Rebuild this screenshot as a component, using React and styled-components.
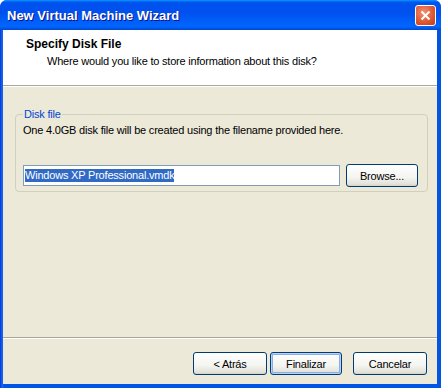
import React from 'react';
import styled, { createGlobalStyle } from 'styled-components';

const Global = createGlobalStyle`
  html, body { margin: 0; padding: 0; background: #fff; }
  body {
    font-family: Tahoma, "Liberation Sans", Arial, sans-serif;
    font-size: 11px;
    letter-spacing: -0.2px;
    color: #000;
  }
`;

const Window = styled.div`
  width: 441px;
  height: 388px;
  box-sizing: border-box;
  display: flex;
  flex-direction: column;
  background: linear-gradient(to right, #0831d9 0, #166aee 2px, #0055e5 4px);
  border-radius: 7px 7px 0 0;
  overflow: hidden;
`;

const TitleBar = styled.div`
  height: 30px;
  flex: none;
  display: flex;
  align-items: center;
  justify-content: space-between;
  padding: 0 5px 0 7px;
  background: linear-gradient(to bottom, #0997ff 0, #0053ee 8%, #0050ee 40%, #0066ff 88%, #0048d0 100%);
`;

const Title = styled.span`
  color: #fff;
  font-family: "Liberation Sans", Arial, sans-serif;
  font-weight: bold;
  font-size: 13px;
  letter-spacing: 0;
  text-shadow: 1px 1px #0f1089;
`;

const CloseButton = styled.div`
  width: 21px;
  height: 21px;
  box-sizing: border-box;
  border: 1px solid #fff;
  border-radius: 3px;
  background: radial-gradient(circle at 40% 35%, #f29176 0, #e05a34 55%, #c2391a 100%);
  display: flex;
  align-items: center;
  justify-content: center;
`;

const Client = styled.div`
  flex: 1;
  margin: 0 4px 4px 3px;
  background: #ece9d8;
  display: flex;
  flex-direction: column;
`;

const Header = styled.div`
  height: 56px;
  background: #fff;
  border-bottom: 1px solid #aca899;
  box-shadow: 0 1px 0 #fff;
  padding: 7px 0 0 23px;
  box-sizing: border-box;
`;

const HeaderTitle = styled.div`
  font-weight: bold;
  font-size: 12px;
  letter-spacing: 0;
  line-height: 14px;
`;

const HeaderSub = styled.div`
  margin: 4px 0 0 21px;
  line-height: 13px;
`;

const Body = styled.div`
  flex: 1;
  padding: 22px 10px 0 12px;
`;

const Group = styled.fieldset`
  margin: 0;
  padding: 3px 9px 9px 7px;
  border: 1px solid #d0d0bf;
  border-radius: 4px;
  height: 84px;
  box-sizing: border-box;
`;

const Legend = styled.legend`
  color: #0046d5;
  padding: 0 1px;
  margin-left: 0;
  line-height: 13px;
`;

const Info = styled.div`
  line-height: 13px;
`;

const FileRow = styled.div`
  display: flex;
  align-items: center;
  gap: 6px;
  margin-top: 27px;
`;

const Input = styled.div`
  width: 317px;
  height: 21px;
  box-sizing: border-box;
  border: 1px solid #7f9db9;
  background: #fff;
  padding: 3px 0 0 1px;
`;

const Selected = styled.span`
  background: #316ac5;
  color: #fff;
  line-height: 13px;
  display: inline-block;
`;

const Button = styled.div`
  width: ${p => p.w || 73}px;
  height: 23px;
  box-sizing: border-box;
  border: 1px solid #003c74;
  border-radius: 3px;
  background: linear-gradient(to bottom, #ffffff 0, #f4f4f0 60%, #e3e3db 90%, #d6d0c5 100%);
  box-shadow: ${p => (p.focus ? 'inset 0 0 0 1px #b8d2f7, inset 0 0 0 2px #89ade4' : 'none')};
  display: flex;
  align-items: center;
  justify-content: center;
  flex: none;
`;

const Separator = styled.div`
  height: 1px;
  background: #aca899;
  box-shadow: 0 1px 0 #fff;
`;

const Footer = styled.div`
  height: 46px;
  display: flex;
  justify-content: flex-end;
  align-items: flex-start;
  padding: 14px 10px 0 0;
  box-sizing: border-box;
`;

const Spacer = styled.div`
  width: ${p => p.w}px;
`;

export default function App() {
  return (
    <>
      <Global />
      <Window>
        <TitleBar>
          <Title>New Virtual Machine Wizard</Title>
          <CloseButton>
            <svg width="11" height="11" viewBox="0 0 11 11">
              <path d="M1.5 1.5L9.5 9.5M9.5 1.5L1.5 9.5" stroke="#fff" strokeWidth="2" />
            </svg>
          </CloseButton>
        </TitleBar>
        <Client>
          <Header>
            <HeaderTitle>Specify Disk File</HeaderTitle>
            <HeaderSub>Where would you like to store information about this disk?</HeaderSub>
          </Header>
          <Body>
            <Group>
              <Legend>Disk file</Legend>
              <Info>One 4.0GB disk file will be created using the filename provided here.</Info>
              <FileRow>
                <Input>
                  <Selected>Windows XP Professional.vmdk</Selected>
                </Input>
                <Button w={72}>Browse...</Button>
              </FileRow>
            </Group>
          </Body>
          <Separator />
          <Footer>
            <Button w={74}>&lt; Atrás</Button>
            <Spacer w={3} />
            <Button w={72} focus>Finalizar</Button>
            <Spacer w={11} />
            <Button w={74}>Cancelar</Button>
          </Footer>
        </Client>
      </Window>
    </>
  );
}
